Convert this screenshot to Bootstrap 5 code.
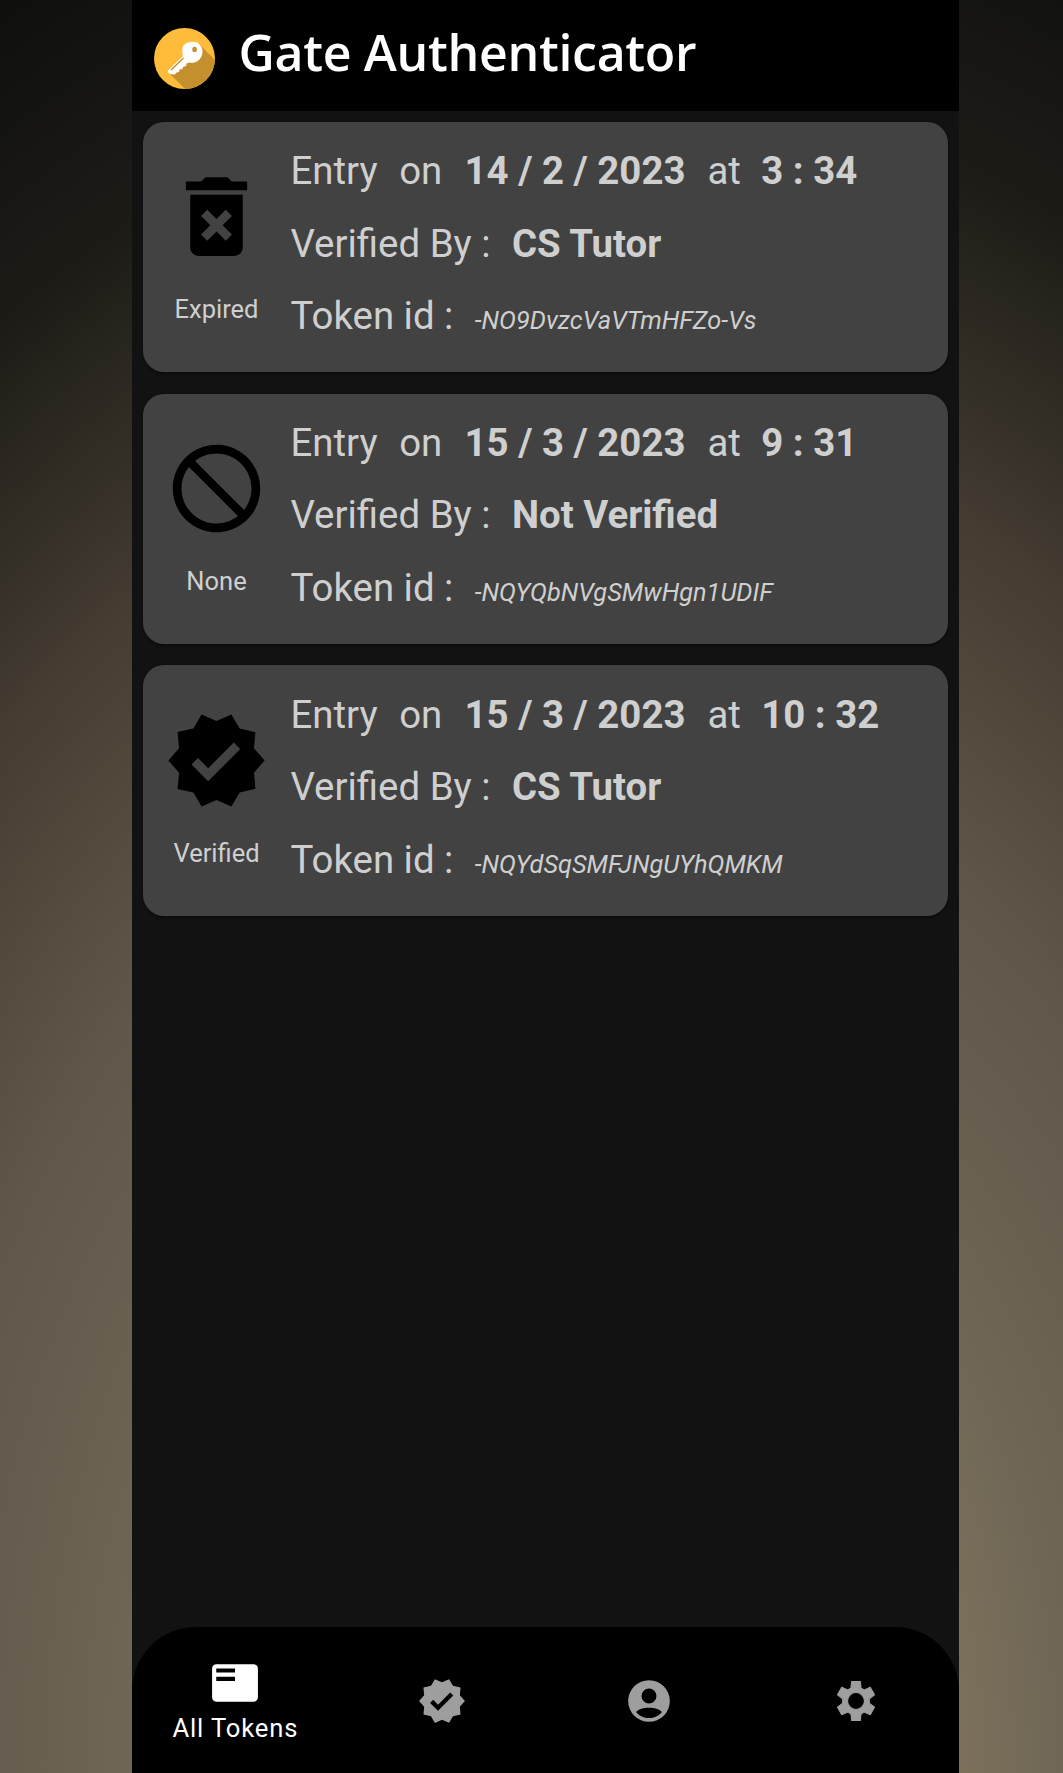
<!DOCTYPE html>
<html lang="en">
<head>
<meta charset="utf-8">
<meta name="viewport" content="width=device-width, initial-scale=1">
<title>Gate Authenticator</title>
<link href="https://cdn.jsdelivr.net/npm/bootstrap@5.3.0/dist/css/bootstrap.min.css" rel="stylesheet">
<style>
  body {
    font-family: Roboto, sans-serif;
    color: #cfcfcf;
    background: radial-gradient(1300px 1900px at 600px 1773px, #80745c 0%, #7d715a 27%, #6f6657 36%, #685f51 44%, #5f5749 54%, #50483b 64%, #453c32 71.5%, #393329 76%, #29261f 83.5%, #1e1b17 89%, #191714 94%, #131310 99%, #0f0f0d 104%) no-repeat #0f100e;
    height: 1773px;
    overflow: hidden;
  }
  .phone { width: 827px; height: 1773px; margin-left: 132px; background: #121212; }
  .topbar { height: 111px; background: #000; padding: 0 0 7px 22px; }
  .topbar h1 { font: 600 50px/60px "Open Sans", sans-serif; color: #fff; margin: 0 0 0 23.5px; letter-spacing: -.3px; white-space: nowrap; }
  .tokens { padding: 10.7px 11.2px 0 10.5px; gap: 21.7px; }
  .token { height: 250.2px; border-radius: 21px; background: #424242; box-shadow: 0 1px 3px rgba(0,0,0,.55); }
  .status { width: 148px; padding-top: 42.8px; font-size: 25.5px; line-height: 30px; }
  .status svg { width: 105px; height: 105px; fill: #000; }
  .status span { margin-top: 24.5px; }
  .info { padding-top: 13.3px; font-size: 38.4px; line-height: 72.6px; white-space: pre; }
  .info em { font-size: 25.35px; }
  .info em, .info b { margin-left: 2.3px; }
  .info i { font-style: normal; margin: 0 1px 0 2.5px; }
  .info b + i { margin: 0 -1px 0 3px; }
  .tabs { height: 146px; background: #000; border-radius: 64px 64px 0 0; }
  .tabs svg { width: 50px; height: 50px; margin-top: 1px; fill: #9e9e9e; }
  .tabs .active svg { fill: #fff; margin: 1px 0 5px; }
  .tabs a { color: #fff; font-size: 25.6px; line-height: 30px; letter-spacing: .85px; text-decoration: none; }
</style>
</head>
<body>
<svg class="d-none">
  <symbol id="verified" viewBox="0 0 24 24"><path d="M23 12l-2.440-2.790.340-3.690-3.610-.820-1.890-3.200L12 2.960 8.600 1.500 6.710 4.690 3.100 5.500l.34 3.700L1 12l2.440 2.790-.34 3.700 3.610.82L8.600 22.500l3.400-1.470 3.400 1.460 1.890-3.190 3.610-.82-.34-3.690L23 12zm-12.910 4.720l-3.800-3.810 1.480-1.480 2.320 2.330 5.850-5.870 1.480 1.480-7.330 7.350z"/></symbol>
</svg>
<div class="phone d-flex flex-column">
  <header class="topbar d-flex align-items-center">
    <svg width="61" height="61" viewBox="0 0 61 61" class="flex-shrink-0 mt-3 mb-1">
      <clipPath id="disc"><circle cx="30.5" cy="30.5" r="30.5"/></clipPath>
      <circle cx="30.5" cy="30.5" r="30.5" fill="#ffbc3b"/>
      <path clip-path="url(#disc)" fill="#c68f2e" d="M46 17L68 39 61 70H40L15 45z"/>
      <path fill="#fff" d="M31.500 15.500Q37 12.500 43 14.500Q49 18 48.500 25Q48 29 45 32Q41 36 35 34.500L32.500 35.500L32 38L29 39L28.500 41L25.500 41.500L25 44L22.500 44.500L21 46.500L15.500 46L13.500 43L29 28Q26.500 19 31.500 15.500z"/>
      <ellipse cx="40.600" cy="21.400" rx="2.300" ry="2.700" fill="#c68f2e"/>
      <path d="M17 42L29.500 30" stroke="#c68f2e" stroke-width="1.400"/>
    </svg>
    <h1>Gate Authenticator</h1>
  </header>
  <main class="tokens d-flex flex-column flex-grow-1">
    <section class="token d-flex">
      <div class="status d-flex flex-column align-items-center">
        <svg viewBox="0 0 24 24"><path d="M6 19c0 1.100.9 2 2 2h8c1.100 0 2-.9 2-2V7H6v12zm2.460-7.120l1.410-1.410L12 12.590l2.120-2.120 1.410 1.410L13.410 14l2.120 2.120-1.410 1.410L12 15.410l-2.120 2.120-1.410-1.410L10.590 14l-2.130-2.120zM15.500 4l-1-1h-5l-1 1H5v2h14V4z"/></svg>
        <span>Expired</span>
      </div>
      <div class="info"><div>Entry  <i>on</i>  <b>14 / 2 / 2023</b>  <i>at</i>  <b>3 : 34</b></div><div>Verified By :  <b>CS Tutor</b></div><div>Token id :  <em>-NO9DvzcVaVTmHFZo-Vs</em></div></div>
    </section>
    <section class="token d-flex">
      <div class="status d-flex flex-column align-items-center">
        <svg viewBox="0 0 24 24"><path d="M12 2C6.480 2 2 6.480 2 12s4.480 10 10 10 10-4.480 10-10S17.520 2 12 2zM4 12c0-4.420 3.580-8 8-8 1.850 0 3.550.63 4.900 1.690L5.690 16.900C4.630 15.550 4 13.850 4 12zm8 8c-1.850 0-3.550-.63-4.900-1.690L18.310 7.100C19.370 8.450 20 10.150 20 12c0 4.420-3.580 8-8 8z" transform="matrix(-1 0 0 1 24 0)"/></svg>
        <span>None</span>
      </div>
      <div class="info"><div>Entry  <i>on</i>  <b>15 / 3 / 2023</b>  <i>at</i>  <b>9 : 31</b></div><div>Verified By :  <b>Not Verified</b></div><div>Token id :  <em>-NQYQbNVgSMwHgn1UDIF</em></div></div>
    </section>
    <section class="token d-flex">
      <div class="status d-flex flex-column align-items-center">
        <svg><use href="#verified"/></svg>
        <span>Verified</span>
      </div>
      <div class="info"><div>Entry  <i>on</i>  <b>15 / 3 / 2023</b>  <i>at</i>  <b>10 : 32</b></div><div>Verified By :  <b>CS Tutor</b></div><div>Token id :  <em>-NQYdSqSMFJNgUYhQMKM</em></div></div>
    </section>
  </main>
  <nav class="tabs row g-0 align-items-center">
    <a href="#" class="active col d-flex flex-column align-items-center"><svg viewBox="0 0 24 24"><path d="M21 3H3c-1.100 0-2 .9-2 2v14c0 1.100.9 2 2 2h18c1.100 0 2-.9 2-2V5c0-1.100-.9-2-2-2zm-9 8H3V9h9v2zm0-4H3V5h9v2z"/></svg><span>All Tokens</span></a>
    <a href="#" class="col d-flex justify-content-center"><svg><use href="#verified"/></svg></a>
    <a href="#" class="col d-flex justify-content-center"><svg viewBox="0 0 24 24"><path fill-rule="evenodd" d="M12 2a10 10 0 1 0 0 20a10 10 0 0 0 0-20zM12 6a3.600 3.600 0 1 1 0 7.200a3.600 3.600 0 0 1 0-7.200zM12 20.200c-2.400 0-4.600-.9-6.200-2.900c1.300-1.500 3.700-2.100 6.200-2.100s4.900.6 6.200 2.100c-1.600 2-3.800 2.900-6.200 2.900z"/></svg></a>
    <a href="#" class="col d-flex justify-content-center"><svg viewBox="0 0 24 24"><path fill-rule="evenodd" stroke="#9e9e9e" stroke-width=".5" stroke-linejoin="round" d="M9.900 2.600h4.200l.35 3.200 1.500.85 2.900-1.250 2.050 3.600-2.500 1.950v2.100l2.500 1.950-2.050 3.600-2.900-1.250-1.500.85-.35 3.200H9.900l-.35-3.200-1.500-.85-2.900 1.250L3.100 15l2.500-1.950v-2.100L3.100 9l2.050-3.600 2.900 1.250 1.500-.85zM12 7.950a4.050 4.050 0 1 0 0 8.100a4.050 4.050 0 0 0 0-8.100z"/></svg></a>
  </nav>
</div>
<script src="https://cdn.jsdelivr.net/npm/bootstrap@5.3.0/dist/js/bootstrap.bundle.min.js"></script>
</body>
</html>
